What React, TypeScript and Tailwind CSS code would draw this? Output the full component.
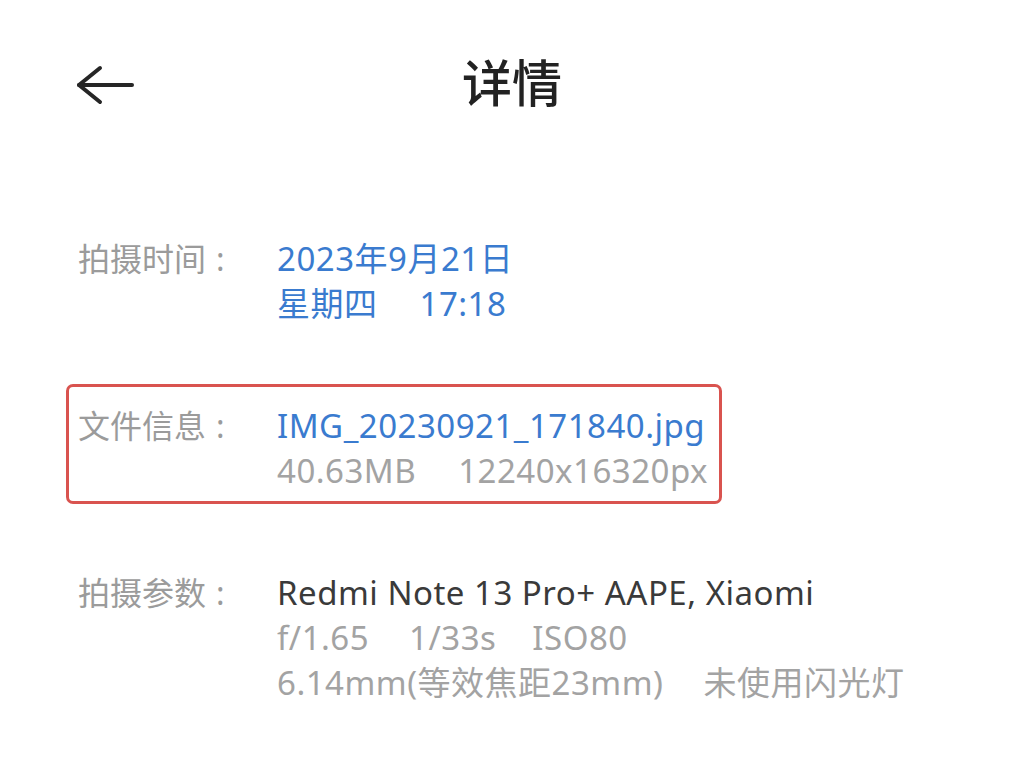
import React from "react";

const font = { fontFamily: '"Noto Sans", "Noto Sans CJK SC", sans-serif' };

const Gap = ({ w }: { w: string }) => <span className={`inline-block ${w}`} />;

const Row = ({ label, children }: { label: string; children: React.ReactNode }) => (
  <div className="flex">
    <div className="w-[199px] shrink-0 text-[32px] leading-[45px] text-[#9b9b9b]">
      {label}
      <span className="ml-[10px]">:</span>
    </div>
    <div className="flex flex-col text-[33px] leading-[45px] tracking-[0.5px]">{children}</div>
  </div>
);

export default function App() {
  return (
    <div className="w-[1024px] h-[757px] bg-white overflow-hidden" style={font}>
      <div className="relative h-[170px] flex items-start justify-center pt-[48px]">
        <button className="absolute left-[76px] top-[64px] w-[60px] h-[42px] flex items-center">
          <svg width="60" height="42" viewBox="0 0 60 42" fill="none" stroke="#262626" strokeWidth="4" strokeLinecap="round" strokeLinejoin="round">
            <path d="M3 21 H56" />
            <path d="M24 4 L3 21 L24 38" />
          </svg>
        </button>
        <h1 className="text-[50px] leading-[70px] font-medium text-[#222]">详情</h1>
      </div>

      <div className="px-[78px] flex flex-col pt-[66px]">
        <Row label="拍摄时间">
          <span className="text-[#3a7bcf]">2023年9月21日</span>
          <span className="text-[#3a7bcf]">
            星期四<Gap w="w-[42px]" />17:18
          </span>
        </Row>

        <div className="relative mt-[77px]">
          <div className="absolute -left-[12px] -top-[19px] w-[656px] h-[120px] border-[3px] border-[#d9534f] rounded-[7px] pointer-events-none" />
          <Row label="文件信息">
            <span className="text-[#3a7bcf]">IMG_20230921_171840.jpg</span>
            <span className="text-[#a3a3a3]">
              40.63MB<Gap w="w-[42px]" />12240x16320px
            </span>
          </Row>
        </div>

        <div className="mt-[77px]">
          <Row label="拍摄参数">
            <span className="text-[#3a3a3a]">Redmi Note 13 Pro+ AAPE, Xiaomi</span>
            <span className="text-[#a3a3a3]">
              f/1.65<Gap w="w-[40px]" />1/33s<Gap w="w-[36px]" />ISO80
            </span>
            <span className="text-[#a3a3a3]">
              6.14mm(等效焦距23mm)<Gap w="w-[40px]" />未使用闪光灯
            </span>
          </Row>
        </div>
      </div>
    </div>
  );
}
